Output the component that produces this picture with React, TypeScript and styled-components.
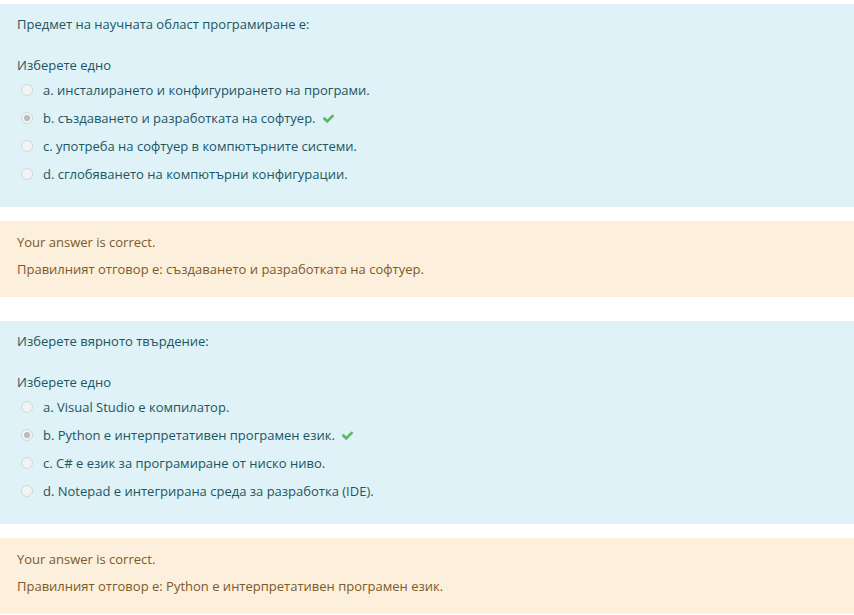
import styled, { createGlobalStyle } from "styled-components";

export default App;

interface Question {
  text: string;
  options: string[];
  answer: number;
  correct: string;
}

const QUESTIONS: Question[] = [
  {
    text: "Предмет на научната област програмиране е:",
    options: [
      "a. инсталирането и конфигурирането на програми.",
      "b. създаването и разработката на софтуер.",
      "c. употреба на софтуер в компютърните системи.",
      "d. сглобяването на компютърни конфигурации.",
    ],
    answer: 1,
    correct: "създаването и разработката на софтуер.",
  },
  {
    text: "Изберете вярното твърдение:",
    options: [
      "a. Visual Studio е компилатор.",
      "b. Python е интерпретативен програмен език.",
      "c. C# е език за програмиране от ниско ниво.",
      "d. Notepad е интегрирана среда за разработка (IDE).",
    ],
    answer: 1,
    correct: "Python е интерпретативен програмен език.",
  },
];

function Radio({ checked }: { checked: boolean }) {
  return (
    <RadioIcon width="12" height="12" viewBox="0 0 12 12">
      <circle cx="6" cy="6" r="5.5" fill="#f1f3f4" stroke="#d2d6d8" />
      {checked && <circle cx="6" cy="6" r="3" fill="#b7bcbf" />}
    </RadioIcon>
  );
}

function Check() {
  return (
    <CheckIcon width="13" height="13" viewBox="0 0 1792 1792">
      <path
        fill="#5cb85c"
        d="M1671 566q0 40-28 68l-724 724-136 136q-28 28-68 28t-68-28l-136-136-362-362q-28-28-28-68t28-68l136-136q28-28 68-28t68 28l294 295 656-657q28-28 68-28t68 28l136 136q28 28 28 68z"
      />
    </CheckIcon>
  );
}

function App() {
  return (
    <>
      <GlobalStyle />
      <Page>
        {QUESTIONS.map((q, i) => (
          <Block key={i} $first={i === 0}>
            <Formulation>
              <QText>{q.text}</QText>
              <Prompt>Изберете едно</Prompt>
              <Options>
                {q.options.map((o, j) => (
                  <Option key={j}>
                    <Radio checked={j === q.answer} />
                    <span>{o}</span>
                    {j === q.answer && <Check />}
                  </Option>
                ))}
              </Options>
            </Formulation>
            <Outcome>
              <OutcomeLine>Your answer is correct.</OutcomeLine>
              <OutcomeLine>Правилният отговор е: {q.correct}</OutcomeLine>
            </Outcome>
          </Block>
        ))}
      </Page>
    </>
  );
}

const GlobalStyle = createGlobalStyle`
  body {
    margin: 0;
    background: #ffffff;
    font-family: "Open Sans", "Noto Sans", sans-serif;
    font-size: 13px;
  }
`;

const Page = styled.div`
  display: flex;
  flex-direction: column;
  padding-top: 4px;
`;

const Block = styled.div<{ $first: boolean }>`
  display: flex;
  flex-direction: column;
  gap: 14px;
  margin-top: ${(p) => (p.$first ? "0" : "24px")};
`;

const Formulation = styled.div`
  background: #def2f8;
  color: #1d5561;
  padding: 10px 17px 19px;
  height: 203px;
  box-sizing: border-box;
`;

const QText = styled.div`
  line-height: 20px;
`;

const Prompt = styled.div`
  margin-top: 21px;
  line-height: 20px;
`;

const Options = styled.div`
  display: flex;
  flex-direction: column;
  margin-top: 1px;
`;

const Option = styled.div`
  display: flex;
  align-items: center;
  height: 28px;
  padding-left: 4px;
`;

const RadioIcon = styled.svg`
  margin-right: 10px;
  flex-shrink: 0;
`;

const CheckIcon = styled.svg`
  margin-left: 6px;
`;

const Outcome = styled.div`
  background: #fcefdc;
  color: #7d5a29;
  padding: 11px 17px 18px;
  display: flex;
  flex-direction: column;
  gap: 7px;
`;

const OutcomeLine = styled.div`
  line-height: 20px;
`;
